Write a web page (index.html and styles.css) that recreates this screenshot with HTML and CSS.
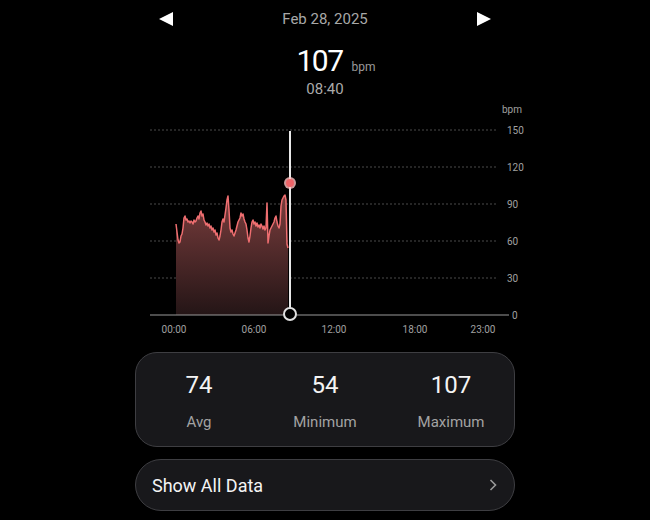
FILE: index.html
```html
<!DOCTYPE html>
<html>
<head>
  <title>Heart Rate</title>
  <link rel="stylesheet" href="styles.css">
</head>
<body>

  <div class="screen">
    <div class="date-bar">
      <svg class="arrow" width="14" height="14" viewBox="0 0 14 14"><polygon points="14,0 14,14 0,7" fill="#fff"/></svg>
      <span class="date">Feb 28, 2025</span>
      <svg class="arrow" width="14" height="14" viewBox="0 0 14 14"><polygon points="0,0 0,14 14,7" fill="#fff"/></svg>
    </div>

    <div class="reading">
      <span class="value">107</span><span class="unit">bpm</span>
    </div>
    <div class="time">08:40</div>

    <svg class="chart" width="390" height="240" viewBox="135 100 390 240">
      <defs>
        <linearGradient id="area" x1="0" y1="0" x2="0" y2="1">
          <stop offset="0" stop-color="#7a3d3d"/>
          <stop offset="1" stop-color="#241516"/>
        </linearGradient>
      </defs>

      <!-- grid -->
      <g class="grid">
        <line x1="150" y1="130" x2="496" y2="130"/>
        <line x1="150" y1="167" x2="496" y2="167"/>
        <line x1="150" y1="204" x2="496" y2="204"/>
        <line x1="150" y1="241" x2="496" y2="241"/>
        <line x1="150" y1="278" x2="496" y2="278"/>
      </g>

      <g class="y-labels">
        <text x="502" y="113">bpm</text>
        <text x="507" y="134">150</text>
        <text x="507" y="171">120</text>
        <text x="507" y="208">90</text>
        <text x="507" y="245">60</text>
        <text x="507" y="282">30</text>
        <text x="512" y="319">0</text>
      </g>

      <polygon class="area" points="176,315 176,224 177,232 178,240 179,243 180,242 181,236 182,234 183,228 184,218 185,216 186,220 187,219 188,222 189,221 190,223 191,221 192,222 193,224 194,220 195,222 196,221 197,218 198,216 199,219 200,213 201,211 202,216 203,214 204,220 205,222 206,225 207,223 208,226 209,224 210,228 211,226 212,230 213,228 214,232 215,230 216,235 217,233 218,238 219,240 220,236 221,230 222,222 223,219 224,222 225,215 226,208 227,200 228,196 229,210 230,228 231,232 232,230 233,234 234,236 235,233 236,230 237,226 238,222 239,220 240,218 241,213 242,216 243,214 244,219 245,222 246,224 247,230 248,238 249,242 250,236 251,228 252,222 253,220 254,224 255,222 256,226 257,223 258,227 259,225 260,228 261,224 262,226 263,229 264,226 265,230 266,228 267,203 268,243 269,236 270,230 271,228 272,226 273,224 274,222 275,218 276,216 277,222 278,226 279,228 280,224 281,206 282,200 283,198 284,196 285,195 286,200 287,244 288,248 288,315"/>
      <polyline class="line" points="176,224 177,232 178,240 179,243 180,242 181,236 182,234 183,228 184,218 185,216 186,220 187,219 188,222 189,221 190,223 191,221 192,222 193,224 194,220 195,222 196,221 197,218 198,216 199,219 200,213 201,211 202,216 203,214 204,220 205,222 206,225 207,223 208,226 209,224 210,228 211,226 212,230 213,228 214,232 215,230 216,235 217,233 218,238 219,240 220,236 221,230 222,222 223,219 224,222 225,215 226,208 227,200 228,196 229,210 230,228 231,232 232,230 233,234 234,236 235,233 236,230 237,226 238,222 239,220 240,218 241,213 242,216 243,214 244,219 245,222 246,224 247,230 248,238 249,242 250,236 251,228 252,222 253,220 254,224 255,222 256,226 257,223 258,227 259,225 260,228 261,224 262,226 263,229 264,226 265,230 266,228 267,203 268,243 269,236 270,230 271,228 272,226 273,224 274,222 275,218 276,216 277,222 278,226 279,228 280,224 281,206 282,200 283,198 284,196 285,195 286,200 287,244 288,248"/>

      <line class="axis" x1="150" y1="315" x2="509" y2="315"/>

      <g class="x-labels">
        <text x="174" y="333">00:00</text>
        <text x="254" y="333">06:00</text>
        <text x="334" y="333">12:00</text>
        <text x="415" y="333">18:00</text>
        <text x="483" y="333">23:00</text>
      </g>

      <!-- cursor -->
      <line class="cursor" x1="290" y1="131" x2="290" y2="308"/>
      <circle class="dot-glow" cx="290" cy="183" r="6"/>
      <circle class="dot" cx="290" cy="183" r="4"/>
      <circle class="handle" cx="290" cy="314" r="6"/>
    </svg>

    <div class="stats">
      <div class="stat">
        <div class="stat-value">74</div>
        <div class="stat-label">Avg</div>
      </div>
      <div class="stat">
        <div class="stat-value">54</div>
        <div class="stat-label">Minimum</div>
      </div>
      <div class="stat">
        <div class="stat-value">107</div>
        <div class="stat-label">Maximum</div>
      </div>
    </div>

    <div class="show-all">
      <span>Show All Data</span>
      <svg width="8" height="12" viewBox="0 0 8 12"><polyline points="1.5,1 6.5,6 1.5,11" fill="none" stroke="#9a9a9a" stroke-width="1.6"/></svg>
    </div>
  </div>

</body>
</html>
```

FILE: styles.css
```css
body {
  font-family: Roboto, "Liberation Sans", sans-serif;
  background-color: #000;
  color: #fff;
  margin: 0;
  padding: 0;
}

.screen {
  width: 380px;
  margin: 0 auto;
}

.date-bar {
  display: flex;
  justify-content: space-between;
  align-items: center;
  height: 38px;
  padding: 0 24px;
}

.date {
  font-size: 15px;
  color: #a8a8a8;
}

.reading {
  display: flex;
  justify-content: center;
  align-items: baseline;
  height: 34px;
  margin-top: 5px;
  padding-left: 22px;
}

.value {
  font-size: 30px;
  font-weight: 400;
  letter-spacing: -1.5px;
}

.unit {
  font-size: 12px;
  color: #9a9a9a;
  margin-left: 9px;
}

.time {
  text-align: center;
  font-size: 15px;
  color: #aaa;
  margin-top: 3px;
  height: 20px;
}

.chart {
  display: block;
  overflow: visible;
}

.grid line {
  stroke: #4a4a4a;
  stroke-width: 1;
  stroke-dasharray: 2 2;
}

.axis {
  stroke: #9a9a9a;
  stroke-width: 1.2;
}

.y-labels text,
.x-labels text {
  font-family: Roboto, sans-serif;
  font-size: 10px;
  fill: #a0a0a0;
}

.x-labels text {
  text-anchor: middle;
}

.area {
  fill: url(#area);
}

.line {
  fill: none;
  stroke: #ee6e70;
  stroke-width: 1.5;
  stroke-linejoin: round;
}

.cursor {
  stroke: #e8e8e8;
  stroke-width: 2;
}

.dot-glow {
  fill: #ffc0c0;
  opacity: 0.8;
}

.dot {
  fill: #ee6468;
}

.handle {
  fill: #000;
  stroke: #e0e0e0;
  stroke-width: 2;
}

.stats {
  display: grid;
  grid-template-columns: repeat(3, 1fr);
  margin-top: 12px;
  height: 93px;
  background-color: #18181b;
  border: 1px solid #3e3e42;
  border-radius: 22px;
}

.stat {
  text-align: center;
  padding-top: 18px;
}

.stat-value {
  font-size: 24px;
  color: #f4f4f4;
}

.stat-label {
  font-size: 15px;
  color: #a3a3a3;
  margin-top: 14px;
}

.show-all {
  display: flex;
  justify-content: space-between;
  align-items: center;
  margin-top: 12px;
  height: 50px;
  padding: 0 17px 0 16px;
  background-color: #18181b;
  border: 1px solid #3e3e42;
  border-radius: 26px;
  font-size: 18px;
  color: #f4f4f4;
}
```
